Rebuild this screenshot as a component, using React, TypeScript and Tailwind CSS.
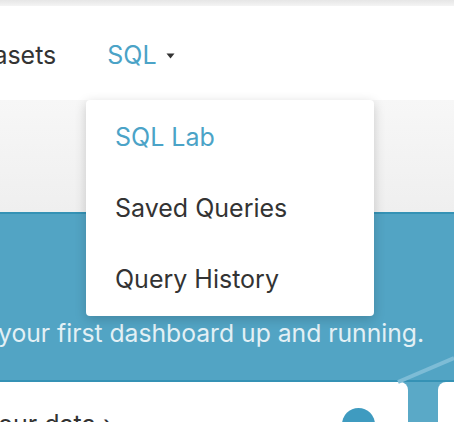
import React from "react";

export default function App() {
  return (
    <div
      className="relative w-[454px] h-[422px] overflow-hidden bg-[#f2f2f2]"
      style={{ fontFamily: "Inter, 'Noto Sans', sans-serif" }}
    >
      {/* top strip */}
      <div className="h-[6px] bg-gradient-to-b from-[#e6e6e6] to-[#f4f4f4]" />
      {/* header */}
      <div className="h-[94px] bg-white pt-[34px]">
        <div className="flex items-center ml-[-47px] text-[25px] leading-[30px] text-[#333]">
          <span>Datasets</span>
          <span className="ml-[51px] text-[#4ba3c7]">SQL</span>
          <svg width="9" height="6" viewBox="0 0 9 6" className="ml-[9px] mt-[2px]">
            <path d="M0.5 0.5 H8.5 L4.5 5.5 Z" fill="#333" />
          </svg>
        </div>
      </div>
      {/* gray zone */}
      <div className="h-[112px] bg-gradient-to-b from-[#f7f7f7] to-[#efefef]" />
      {/* banner */}
      <div className="h-[170px] bg-[#52a4c4] border-t-2 border-b-2 border-[#3592b5] flex flex-col justify-end pb-[32px]">
        <div className="ml-[-2px] text-[24.7px] leading-[30px] text-[#e3f0f5] whitespace-nowrap">
          your first dashboard up and running.
        </div>
      </div>
      {/* cards row */}
      <div className="flex h-[40px] bg-[#5aa9c7]">
        <div className="w-[408px] bg-white rounded-tr-[8px] relative">
          <div className="absolute left-[-2px] top-[27px] text-[25px] leading-[30px] text-[#333] whitespace-nowrap">
            our data ›
          </div>
          <div className="absolute left-[342px] top-[26px] w-[33px] h-[33px] rounded-full bg-[#3f9bc0]" />
        </div>
        <div className="w-[30px]" />
        <div className="flex-1 bg-white rounded-tl-[8px]" />
      </div>
      {/* diagonal decoration */}
      <svg className="absolute left-0 top-0" width="454" height="422">
        <path d="M398 382 L454 358" stroke="#7dbcd6" strokeWidth="4" fill="none" />
      </svg>
      {/* dropdown */}
      <div className="absolute left-[86px] top-[100px] w-[288px] h-[216px] bg-white rounded-[4px] shadow-[0_3px_12px_rgba(0,0,0,0.18)] flex flex-col gap-[41px] pt-[22px] text-[25px] leading-[30px]">
        <div className="pl-[29px] text-[#4ba3c7]">SQL Lab</div>
        <div className="pl-[29px] text-[#333]">Saved Queries</div>
        <div className="pl-[29px] text-[#333]">Query History</div>
      </div>
    </div>
  );
}
